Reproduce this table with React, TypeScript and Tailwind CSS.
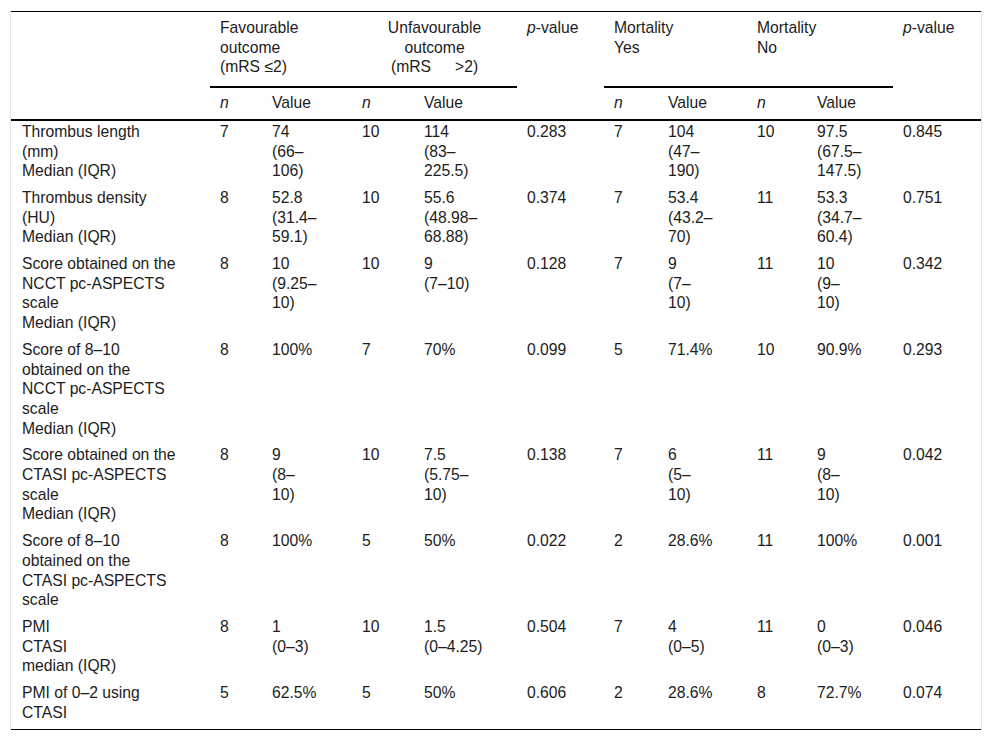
import React from "react";

type Row = {
  label: string[];
  cells: string[][];
};

const rows: Row[] = [
  {
    label: ["Thrombus length", "(mm)", "Median (IQR)"],
    cells: [["7"], ["74", "(66–", "106)"], ["10"], ["114", "(83–", "225.5)"], ["0.283"], ["7"], ["104", "(47–", "190)"], ["10"], ["97.5", "(67.5–", "147.5)"], ["0.845"]],
  },
  {
    label: ["Thrombus density", "(HU)", "Median (IQR)"],
    cells: [["8"], ["52.8", "(31.4–", "59.1)"], ["10"], ["55.6", "(48.98–", "68.88)"], ["0.374"], ["7"], ["53.4", "(43.2–", "70)"], ["11"], ["53.3", "(34.7–", "60.4)"], ["0.751"]],
  },
  {
    label: ["Score obtained on the", "NCCT pc-ASPECTS", "scale", "Median (IQR)"],
    cells: [["8"], ["10", "(9.25–", "10)"], ["10"], ["9", "(7–10)"], ["0.128"], ["7"], ["9", "(7–", "10)"], ["11"], ["10", "(9–", "10)"], ["0.342"]],
  },
  {
    label: ["Score of 8–10", "obtained on the", "NCCT pc-ASPECTS", "scale", "Median (IQR)"],
    cells: [["8"], ["100%"], ["7"], ["70%"], ["0.099"], ["5"], ["71.4%"], ["10"], ["90.9%"], ["0.293"]],
  },
  {
    label: ["Score obtained on the", "CTASI pc-ASPECTS", "scale", "Median (IQR)"],
    cells: [["8"], ["9", "(8–", "10)"], ["10"], ["7.5", "(5.75–", "10)"], ["0.138"], ["7"], ["6", "(5–", "10)"], ["11"], ["9", "(8–", "10)"], ["0.042"]],
  },
  {
    label: ["Score of 8–10", "obtained on the", "CTASI pc-ASPECTS", "scale"],
    cells: [["8"], ["100%"], ["5"], ["50%"], ["0.022"], ["2"], ["28.6%"], ["11"], ["100%"], ["0.001"]],
  },
  {
    label: ["PMI", "CTASI", "median (IQR)"],
    cells: [["8"], ["1", "(0–3)"], ["10"], ["1.5", "(0–4.25)"], ["0.504"], ["7"], ["4", "(0–5)"], ["11"], ["0", "(0–3)"], ["0.046"]],
  },
  {
    label: ["PMI of 0–2 using", "CTASI"],
    cells: [["5"], ["62.5%"], ["5"], ["50%"], ["0.606"], ["2"], ["28.6%"], ["8"], ["72.7%"], ["0.074"]],
  },
];

// column widths, label first
const widths = [199, 52, 90, 62, 103, 87, 54, 89, 60, 86, 88];

function Lines({ lines }: { lines: string[] }) {
  return (
    <>
      {lines.map((l, i) => (
        <div key={i} className="whitespace-nowrap">
          {l}
        </div>
      ))}
    </>
  );
}

export default function App() {
  return (
    <div
      className="min-h-[741px] bg-white pl-[10px] pt-[10px] text-[15.7px] leading-[19.7px] text-[#1c1c1c]"
      style={{ fontFamily: '"Liberation Sans", Arial, sans-serif' }}
    >
      <div className="w-[972px] border-x border-[#e4e4e4] pt-[1px]">
        <table className="w-full table-fixed border-collapse border-y border-black">
          <colgroup>
            {widths.map((w, i) => (
              <col key={i} style={{ width: w }} />
            ))}
          </colgroup>
          <thead>
            <tr className="align-top">
              <th rowSpan={2} className="border-b-2 border-black" />
              <th colSpan={2} className="border-b-2 border-black pb-[9px] pl-[10px] pt-[6px] text-left font-normal">
                <div>Favourable</div>
                <div>outcome</div>
                <div>(mRS ≤2)</div>
              </th>
              <th colSpan={2} className="border-b-2 border-black pb-[9px] pt-[6px] text-center font-normal">
                <div>Unfavourable</div>
                <div>outcome</div>
                <div>
                  (mRS<span className="inline-block w-[24px]" />
                  {">2)"}
                </div>
              </th>
              <th rowSpan={2} className="border-b-2 border-black pl-[10px] pt-[6px] text-left font-normal">
                <i>p</i>-value
              </th>
              <th colSpan={2} className="border-b-2 border-black pb-[9px] pl-[10px] pt-[6px] text-left font-normal">
                <div>Mortality</div>
                <div>Yes</div>
              </th>
              <th colSpan={2} className="border-b-2 border-black pb-[9px] pl-[10px] pt-[6px] text-left font-normal">
                <div>Mortality</div>
                <div>No</div>
              </th>
              <th rowSpan={2} className="border-b-2 border-black pl-[10px] pt-[6px] text-left font-normal">
                <i>p</i>-value
              </th>
            </tr>
            <tr className="border-b-2 border-black text-left align-top">
              <th className="pb-[6px] pl-[10px] pt-[5px] font-normal">
                <i>n</i>
              </th>
              <th className="pb-[6px] pl-[10px] pt-[5px] font-normal">Value</th>
              <th className="pb-[6px] pl-[10px] pt-[5px] font-normal">
                <i>n</i>
              </th>
              <th className="pb-[6px] pl-[10px] pt-[5px] font-normal">Value</th>
              <th className="pb-[6px] pl-[10px] pt-[5px] font-normal">
                <i>n</i>
              </th>
              <th className="pb-[6px] pl-[10px] pt-[5px] font-normal">Value</th>
              <th className="pb-[6px] pl-[10px] pt-[5px] font-normal">
                <i>n</i>
              </th>
              <th className="pb-[6px] pl-[10px] pt-[5px] font-normal">Value</th>
            </tr>
          </thead>
          <tbody>
            {rows.map((r, ri) => (
              <tr key={ri} className="align-top">
                <td className="pb-[6px] pl-[11px] pt-[1px]">
                  <Lines lines={r.label} />
                </td>
                {r.cells.map((c, ci) => (
                  <td key={ci} className="pb-[6px] pl-[10px] pt-[1px]">
                    <Lines lines={c} />
                  </td>
                ))}
              </tr>
            ))}
          </tbody>
        </table>
      </div>
    </div>
  );
}
